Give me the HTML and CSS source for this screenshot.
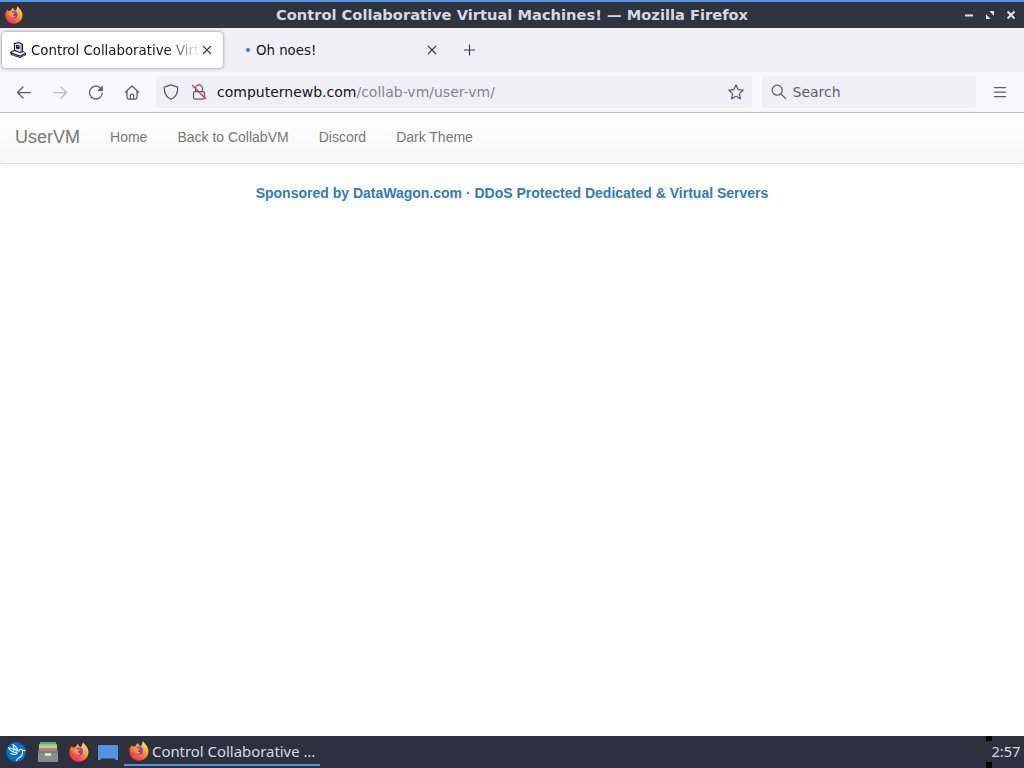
FILE: index.html
```
<!DOCTYPE html>
<html lang="en">
<head>
  <meta charset="UTF-8">
  <meta name="viewport" content="width=device-width, initial-scale=1.0">
  <title>Control Collaborative Virtual Machines!</title>
  <link rel="stylesheet" href="styles.css">
</head>
<body>
  <svg class="defs" width="0" height="0">
    <defs>
      <linearGradient id="flame" x1="0.85" y1="0.05" x2="0.2" y2="1">
        <stop offset="0" stop-color="#ffe84a"/>
        <stop offset="0.45" stop-color="#ff9428"/>
        <stop offset="0.75" stop-color="#fb4a45"/>
        <stop offset="1" stop-color="#e32874"/>
      </linearGradient>
      <linearGradient id="globe" x1="0" y1="0" x2="0" y2="1">
        <stop offset="0" stop-color="#a04ae0"/>
        <stop offset="1" stop-color="#5b3fc0"/>
      </linearGradient>
    </defs>
    <symbol id="firefox" viewBox="0 0 20 20">
      <path fill="url(#flame)" d="M2.7 4.2 4 5.7C4.7 5.3 5.600 5.100 6.400 5.200 7 3.700 8 2.700 9.200 2c0 1.500.8 2.300 2.400 3.200L13 3.500C13.100 2.200 13.500 1 14.200.3c.6 1.900 4.900 4.400 5.200 9.200C19.800 15.300 15.400 19.700 10 19.700S.4 15.500.4 10.300C.4 7.800 1.300 5.800 2.700 4.200Z"/>
      <circle cx="10" cy="9.500" r="4" fill="url(#globe)"/>
      <path fill="#ff9a2b" d="M4 7.200c1.700-1.400 3.500-1 4.500.2h2.500c0 1.100-1.700 1.300-2.200 2.200.1 1.500 1.600 2 2.900 1.400-.8 1.900-3.300 2.500-5 1.100C5.200 11 4.500 9 4 7.200Z"/>
    </symbol>
  </svg>

  <header class="titlebar">
    <svg class="title-icon" width="18" height="18"><use href="#firefox"/></svg>
    <h1 class="title-text">Control Collaborative Virtual Machines! — Mozilla Firefox</h1>
    <div class="window-buttons">
      <svg width="10" height="12" viewBox="0 0 10 12"><path d="M1 6.500h8" stroke="#e3e6ee" stroke-width="2"/></svg>
      <svg width="10" height="12" viewBox="0 0 10 12"><path d="M4.300 2H9v4.700zM1 5.300V10h4.700z" fill="#e3e6ee"/></svg>
      <svg width="10" height="12" viewBox="0 0 10 12"><path d="m1.500 2.500 7 7m0-7-7 7" stroke="#e3e6ee" stroke-width="2"/></svg>
    </div>
  </header>

  <div class="tabs">
    <div class="tab active">
      <svg class="favicon" width="16" height="16" viewBox="0 0 16 16">
        <path d="m4 1 5-1 4 2v7l3 2v2l-6 3-9-3-1-3 4-2z" fill="#171923"/>
        <path d="m5 2 4-1 3 2v6l-2 1-5-2z" fill="#d5d9e6"/>
        <path d="m10.500 3 1.500.5V8l-1.500 1z" fill="#8f97ae"/>
        <path d="m6 3 3.500.5V7L6 6.500z" fill="#10121b"/>
        <path d="M7 4h1.500v1H7z" fill="#8794b5"/>
        <path d="m1.500 10.500 3-1.500 5.500 2 4-1 1 1-5 2.500z" fill="#eceef5"/>
        <path d="m2 12 8 2.500 5-2.500v1l-5 2-8-2z" fill="#9299ae"/>
      </svg>
      <span class="tab-title clipped">Control Collaborative Virt</span>
      <svg class="tab-close" width="10" height="10" viewBox="0 0 10 10"><path d="m1 1 8 8m0-8-8 8"/></svg>
    </div>
    <div class="tab loading">
      <span class="dot"></span>
      <span class="tab-title">Oh noes!</span>
      <svg class="tab-close" width="10" height="10" viewBox="0 0 10 10"><path d="m1 1 8 8m0-8-8 8"/></svg>
    </div>
    <svg class="new-tab" width="12" height="12" viewBox="0 0 12 12"><path d="M5.500.5v11M0 6h11"/></svg>
  </div>

  <div class="toolbar">
    <div class="nav-buttons">
      <svg width="16" height="16" viewBox="0 0 16 16"><path d="M14.500 8.500H1.500m5.500-5.500-5.500 5.500 5.500 5.500"/></svg>
      <svg class="disabled" width="16" height="16" viewBox="0 0 16 16"><path d="M1.500 8.500h13m-5.500-5.500 5.500 5.500-5.500 5.500"/></svg>
      <svg width="16" height="16" viewBox="0 0 16 16"><path d="M14.300 9A6.400 6.400 0 1 1 12.800 4.400"/><path class="solid" d="M14.800 1.500v5.500H9.300z"/></svg>
      <svg width="16" height="16" viewBox="0 0 16 16"><path d="M1.200 8.200 8 2l6.800 6.200M3 7v6.500q0 1.500 1.500 1.500h7q1.500 0 1.500-1.500V7M6.300 15v-3.500q0-1.300 1.700-1.300t1.700 1.300V15"/></svg>
    </div>
    <div class="urlbar">
      <svg width="16" height="16" viewBox="0 0 16 16"><path d="M8 .8 14.700 3.200C15 9 12.500 13.300 8 15.300 3.500 13.300 1 9 1.300 3.200Z"/></svg>
      <svg class="lock" width="16" height="16" viewBox="0 0 16 16"><path d="M4.500 7V4.300a3.500 3.500 0 0 1 7 0V7M4 7.500h8q1.500 0 1.500 1.500v4.500q0 1.500-1.500 1.500H4q-1.500 0-1.500-1.500V9Q2.500 7.500 4 7.500Z"/><path class="strike" d="m1.500 1.500 13 13"/></svg>
      <span class="url"><span class="host">computernewb.com</span>/collab-vm/user-vm/</span>
      <svg class="star" width="16" height="16" viewBox="0 0 16 16"><path d="m8 1 2.100 4.600 5.100.6-3.800 3.400 1.100 5.200L8 12.200l-4.500 2.600 1.100-5.200L.8 6.200l5.100-.6Z"/></svg>
    </div>
    <div class="searchbar">
      <svg width="16" height="16" viewBox="0 0 16 16"><circle cx="6.200" cy="6.200" r="5"/><path d="m9.900 9.900 4.600 4.600"/></svg>
      <span>Search</span>
    </div>
    <svg class="menu" width="12" height="12" viewBox="0 0 12 12"><path d="M.5 1.500h11M.5 6h11M.5 10.500h11"/></svg>
  </div>

  <main class="page">
    <nav class="navbar">
      <a class="brand" href="#">UserVM</a>
      <a href="#">Home</a>
      <a href="#">Back to CollabVM</a>
      <a href="#">Discord</a>
      <a href="#">Dark Theme</a>
    </nav>
    <p class="sponsor"><a href="#">Sponsored by DataWagon.com · DDoS Protected Dedicated &amp; Virtual Servers</a></p>
  </main>

  <footer class="taskbar">
    <div class="launchers">
      <svg width="22" height="22" viewBox="0 0 22 22">
        <circle cx="11" cy="11" r="10" fill="#0870c4"/>
        <path d="M8 3.500c0 3 1.500 5 4 6.500M3.500 6.500c1.500 3.500 4.500 5 8.500 5M3.500 6.500c2.500.3 4 1 5.500 2.500M8 3.500c2.500 1.500 4 3.500 4.500 5.500M20 9.700l-2.700-.7c-1.300-1.500-3.500-.5-3.500 1.300M17.300 9c.7 4-.8 7-3.800 8-1 .5-1.500 1-1.800 2.500M6 12.500c2 1.200 4.500 1 6 0" fill="none" stroke="#e9f5ff" stroke-width="1.200" stroke-linecap="round"/>
      </svg>
      <svg class="files" width="22" height="22" viewBox="0 0 22 22">
        <path d="M3 1h16v5H3z" fill="#4baac1"/>
        <path d="M2 3h18v4H2z" fill="#9acb67"/>
        <path d="M2 5h18v5H2z" fill="#f0c64a"/>
        <path d="M2 7h18l1 4v10H1V11z" fill="#8c8d8c"/>
        <path d="M1 11h20" stroke="#696b6b"/>
        <path d="M8 12.500h6v2H8z" fill="#fff"/>
      </svg>
      <svg width="22" height="22" viewBox="0 0 22 22"><use href="#firefox" x="1" y="1" width="20" height="20"/></svg>
      <svg class="desktop" width="22" height="22" viewBox="0 0 22 22">
        <path d="M1 4h20v15h-2l-1.500-1.500h-13L3 19H1z" fill="#5294e2"/>
      </svg>
    </div>
    <div class="task">
      <svg width="20" height="20"><use href="#firefox"/></svg>
      <span>Control Collaborative …</span>
    </div>
    <div class="tray"></div>
    <time class="clock">2:57</time>
  </footer>
</body>
</html>
```
FILE: styles.css
```
:root {
  --panel: #2d313d;
  --accent: #5294e2;
  --chrome: #f0f0f4;
  --toolbar: #f9f9fb;
  --icon: #5b5b66;
  --text: #15141a;
}

* {
  margin: 0;
  padding: 0;
  box-sizing: border-box;
}

body {
  width: 1024px;
  height: 768px;
  overflow: hidden;
  display: flex;
  flex-direction: column;
  font-family: "DejaVu Sans", sans-serif;
  font-size: 14px;
  color: var(--text);
  background: #fff;
}

svg {
  flex: none;
  display: block;
}

.defs {
  position: absolute;
}

a {
  text-decoration: none;
}

/* window title */
.titlebar {
  height: 28px;
  flex: none;
  display: grid;
  grid-template-columns: 60px 1fr 60px;
  align-items: center;
  background: #2f343f;
  border-top: 2px solid var(--accent);
}

.title-icon {
  margin-left: 5px;
}

.title-text {
  font-size: 14.67px;
  font-weight: bold;
  line-height: 26px;
  text-align: center;
  white-space: nowrap;
  color: #d3dae3;
}

.window-buttons {
  display: flex;
  gap: 11px;
}

/* tab strip */
.tabs {
  height: 44px;
  flex: none;
  display: flex;
  align-items: center;
  padding-left: 2px;
  background: var(--chrome);
}

.tab {
  display: flex;
  align-items: center;
  height: 36px;
}

.tab svg,
.new-tab {
  stroke: #3b3a43;
  stroke-width: 1.1;
}

.tab .favicon {
  stroke: none;
}

.tab.active {
  width: 221px;
  padding-left: 8px;
  background: #fff;
  border-radius: 4px;
  box-shadow: 0 0 3px rgba(0, 0, 0, 0.5);
}

.tab.loading {
  width: 225px;
  padding-left: 23px;
}

.tab-title {
  flex: none;
  font-size: 13.33px;
  white-space: nowrap;
}

.tab-title.clipped {
  width: 170px;
  margin-left: 5px;
  -webkit-mask-image: linear-gradient(to left, transparent, #000 34px);
  mask-image: linear-gradient(to left, transparent, #000 34px);
}

.tab.active .tab-close {
  margin-left: 1px;
}

.tab.loading .tab-close {
  margin-left: auto;
  margin-right: 11px;
}

.dot {
  width: 4px;
  height: 4px;
  margin-right: 6px;
  border-radius: 50%;
  background: #0a84ff;
}

.new-tab {
  margin-left: 16px;
}

/* address bar */
.toolbar {
  height: 41px;
  flex: none;
  display: flex;
  align-items: center;
  padding: 0 18px 0 16px;
  background: var(--toolbar);
  border-bottom: 1px solid #c4c4c9;
}

.toolbar svg {
  fill: none;
  stroke: var(--icon);
  stroke-width: 1.25;
  stroke-linecap: round;
  stroke-linejoin: round;
}

.toolbar .solid {
  fill: var(--icon);
  stroke: none;
}

.nav-buttons {
  display: flex;
  gap: 20px;
}

.nav-buttons .disabled {
  opacity: 0.4;
}

.urlbar,
.searchbar {
  height: 32px;
  display: flex;
  align-items: center;
  background: var(--chrome);
  border-radius: 4px;
}

.urlbar {
  width: 596px;
  margin-left: 16px;
  padding: 0 8px 0 7px;
}

.urlbar .lock {
  margin: 0 10px 0 12px;
}

.toolbar .strike {
  stroke: #e22850;
}

.url {
  color: #85848c;
}

.host {
  color: var(--text);
}

.star {
  margin-left: auto;
}

.searchbar {
  width: 214px;
  margin-left: 10px;
  padding-left: 9px;
  gap: 5.5px;
  color: #5e5d66;
}

.menu {
  margin-left: auto;
}

/* web page */
.page {
  flex: 1;
  font-family: "Liberation Sans", Arial, sans-serif;
}

.navbar {
  height: 51px;
  display: flex;
  align-items: center;
  gap: 30px;
  padding-left: 15px;
  padding-bottom: 2px;
  background: linear-gradient(#fff, #f8f8f8);
  border-bottom: 1px solid #dedede;
  box-shadow: 0 1px 5px rgba(0, 0, 0, 0.075);
}

.navbar a {
  color: #777;
}

.navbar .brand {
  font-size: 18px;
}

.sponsor {
  margin-top: 19px;
  line-height: 20px;
  text-align: center;
  font-weight: bold;
}

.sponsor a {
  color: #337ab7;
}

/* desktop panel */
.taskbar {
  height: 32px;
  flex: none;
  display: flex;
  align-items: center;
  padding-left: 5px;
  background: var(--panel);
  color: #d3dae3;
  font-family: "Noto Sans", sans-serif;
}

.launchers {
  width: 119px;
  display: flex;
  gap: 9px;
}

.files {
  margin-left: 1px;
}

.desktop {
  margin-left: -2px;
}

.task {
  width: 196px;
  height: 30px;
  display: flex;
  align-items: center;
  gap: 3px;
  padding-top: 2px;
  padding-left: 5px;
  align-self: flex-start;
  border-bottom: 2px solid var(--accent);
  white-space: nowrap;
}

.task span {
  font-size: 14.9px;
}

.tray {
  width: 6px;
  height: 32px;
  margin-left: auto;
  background: linear-gradient(#000 5px, transparent 5px, transparent 26px, #000 26px);
}

.clock {
  width: 32px;
  padding: 0 0 2px;
  margin-left: -2px;
  margin-right: 2px;
  font-size: 14.6px;
  text-align: center;
}
```
